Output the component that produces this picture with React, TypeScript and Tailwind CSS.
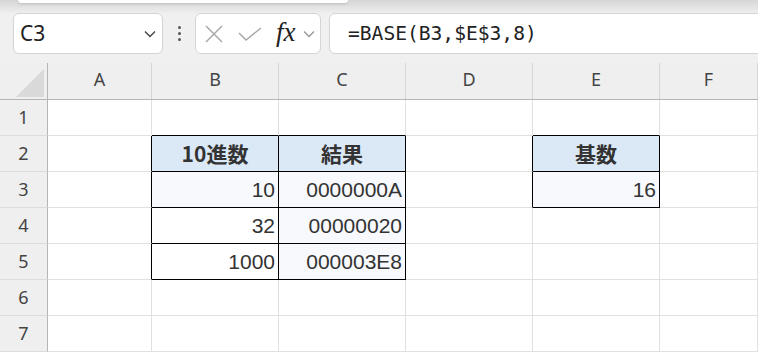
import React from "react";

type Cell = {
  text?: string;
  bold?: boolean;
  align?: "left" | "right" | "center";
  bg?: string;
  right?: boolean; // black right edge
  bottom?: boolean; // black bottom edge
};

const cols = ["A", "B", "C", "D", "E", "F"];
const colWidths = ["w-[104px]", "w-[127px]", "w-[127px]", "w-[127px]", "w-[127px]", "flex-1"];

const head = "bg-[#dbe9f7]";
const soft = "bg-[#f7f9fc]";

// rows 1..7, columns A..F
const rows: Cell[][] = [
  [{}, { bottom: true }, { bottom: true }, {}, { bottom: true }, {}],
  [
    { right: true },
    { text: "10進数", bold: true, align: "center", bg: head, right: true, bottom: true },
    { text: "結果", bold: true, align: "center", bg: head, right: true, bottom: true },
    { right: true },
    { text: "基数", bold: true, align: "center", bg: head, right: true, bottom: true },
    {},
  ],
  [
    { right: true },
    { text: "10", align: "right", bg: soft, right: true, bottom: true },
    { text: "0000000A", align: "right", bg: soft, right: true, bottom: true },
    { right: true },
    { text: "16", align: "right", bg: soft, right: true, bottom: true },
    {},
  ],
  [
    { right: true },
    { text: "32", align: "right", right: true, bottom: true },
    { text: "00000020", align: "right", bg: soft, right: true, bottom: true },
    {},
    {},
    {},
  ],
  [
    { right: true },
    { text: "1000", align: "right", right: true, bottom: true },
    { text: "000003E8", align: "right", bg: soft, right: true, bottom: true },
    {},
    {},
    {},
  ],
  [{}, {}, {}, {}, {}, {}],
  [{}, {}, {}, {}, {}, {}],
];

const Chevron = ({ className }: { className?: string }) => (
  <svg className={className} viewBox="0 0 12 8" fill="none" stroke="currentColor" strokeWidth="1.4">
    <path d="M1 1.5 L6 6.5 L11 1.5" />
  </svg>
);

export default function App() {
  return (
    <div className="w-[758px] h-[355px] overflow-hidden bg-[#f0f0f0] flex flex-col font-['Noto_Sans',sans-serif] text-[#333]">
      {/* ribbon edge */}
      <div className="h-[13px] bg-gradient-to-b from-[#d6d6d6] to-[#eeeeee]">
        <div className="ml-[18px] w-[330px] h-[3px] bg-white rounded-b-[6px] shadow-[0_1px_3px_rgba(0,0,0,0.15)]" />
      </div>

      {/* formula bar */}
      <div className="h-[41px] flex pl-[13px]">
        <div className="w-[150px] bg-white border border-[#d4d4d4] rounded-[6px] flex items-center justify-between pl-[6px] pr-[6px]">
          <span className="text-[21px] text-[#222] leading-none">C3</span>
          <Chevron className="w-[12px] h-[8px] text-[#444]" />
        </div>
        <div className="w-[32px] flex flex-col items-center justify-center gap-[3px]">
          <span className="w-[3px] h-[3px] rounded-full bg-[#555]" />
          <span className="w-[3px] h-[3px] rounded-full bg-[#555]" />
          <span className="w-[3px] h-[3px] rounded-full bg-[#555]" />
        </div>
        <div className="w-[126px] bg-white border border-[#d4d4d4] rounded-[6px] flex items-center pl-[9px]">
          <svg className="w-[18px] h-[18px]" viewBox="0 0 18 18" fill="none" stroke="#a8a8a8" strokeWidth="1.5">
            <path d="M1 1 L17 17 M17 1 L1 17" />
          </svg>
          <svg className="ml-[15px] w-[24px] h-[14px]" viewBox="0 0 24 14" fill="none" stroke="#a8a8a8" strokeWidth="1.5">
            <path d="M1 6 L8 13 L23 1" />
          </svg>
          <span className="ml-[14px] font-['Liberation_Serif',serif] italic text-[27px] leading-none text-[#222] -mt-[3px]">
            fx
          </span>
          <Chevron className="ml-[7px] w-[12px] h-[8px] text-[#999]" />
        </div>
        <div className="flex-1 ml-[8px] -mr-[10px] bg-white border border-[#d4d4d4] rounded-[6px] flex items-center pl-[18px]">
          <span className="font-['DejaVu_Sans_Mono',monospace] text-[19.6px] text-[#222] leading-none">
            =BASE(B3,$E$3,8)
          </span>
        </div>
      </div>

      <div className="h-[9px]" />

      {/* column headers */}
      <div className="h-[37px] flex bg-[#efefef] border-b border-[#b5b5b5]">
        <div className="w-[48px] border-r border-[#b5b5b5] flex items-end justify-end pr-[3px] pb-[2px]">
          <svg className="w-[28px] h-[28px]" viewBox="0 0 28 28">
            <path d="M28 0 L28 28 L0 28 Z" fill="#d9d9d9" />
          </svg>
        </div>
        {cols.map((c, i) => (
          <div
            key={c}
            className={`${colWidths[i]} border-r border-[#d6d6d6] flex items-center justify-center pb-[4px] text-[18px] text-[#444]`}
          >
            {c}
          </div>
        ))}
      </div>

      {/* grid */}
      <div className="flex-1 bg-white">
        {rows.map((row, r) => (
          <div key={r} className="h-[36px] flex">
            <div className="w-[48px] bg-[#efefef] border-r border-b border-r-[#b5b5b5] border-b-[#dcdcdc] flex items-center justify-center text-[18px] text-[#444]">
              {r + 1}
            </div>
            {row.map((cell, i) => (
              <div
                key={i}
                className={[
                  colWidths[i],
                  "border-r border-b flex items-center",
                  cell.right ? "border-r-black" : "border-r-[#e0e0e0]",
                  cell.bottom ? "border-b-black" : "border-b-[#e0e0e0]",
                  cell.bg ?? "",
                  cell.align === "center" ? "justify-center" : cell.align === "right" ? "justify-end pr-[3px]" : "",
                  cell.bold
                    ? "font-bold text-[21px] font-['Noto_Sans_CJK_JP',sans-serif] text-[#333]"
                    : "text-[21px] font-['Liberation_Sans','Noto_Sans_CJK_JP',sans-serif] text-[#333] pt-[1px]",
                ].join(" ")}
              >
                {cell.text}
              </div>
            ))}
          </div>
        ))}
      </div>
    </div>
  );
}
